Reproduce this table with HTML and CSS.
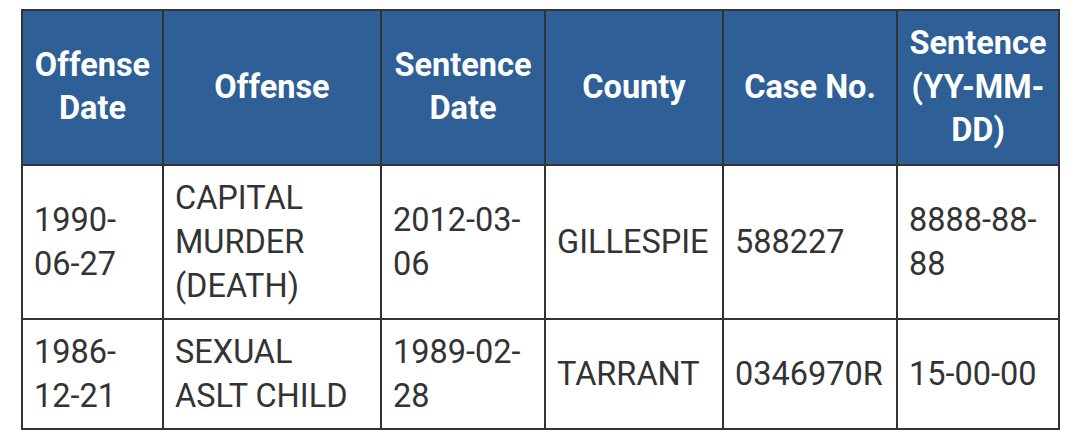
FILE: index.html
```html
<!DOCTYPE html>
<html>
<head>
<meta charset="utf-8">
<link rel="stylesheet" href="styles.css">
</head>
<body>
<table class="records">
  <colgroup>
    <col class="c1"><col class="c2"><col class="c3"><col class="c4"><col class="c5"><col class="c6">
  </colgroup>
  <thead>
    <tr>
      <th>Offense Date</th>
      <th>Offense</th>
      <th>Sentence Date</th>
      <th>County</th>
      <th>Case No.</th>
      <th>Sentence (YY-MM-DD)</th>
    </tr>
  </thead>
  <tbody>
    <tr class="r1">
      <td>1990-06-27</td>
      <td>CAPITAL MURDER (DEATH)</td>
      <td>2012-03-06</td>
      <td>GILLESPIE</td>
      <td>588227</td>
      <td>8888-88-88</td>
    </tr>
    <tr class="r2">
      <td>1986-12-21</td>
      <td>SEXUAL ASLT CHILD</td>
      <td>1989-02-28</td>
      <td>TARRANT</td>
      <td>0346970R</td>
      <td>15-00-00</td>
    </tr>
  </tbody>
</table>
</body>
</html>
```

FILE: styles.css
```css
html, body {
  margin: 0;
  padding: 0;
  background: #ffffff;
}
body {
  padding: 9px 0 0 21px;
  font-family: Roboto, "Liberation Sans", sans-serif;
}
.records {
  border-collapse: collapse;
  table-layout: fixed;
  width: 1039px;
  font-size: 32.5px;
  line-height: 44px;
  color: #333333;
}
.c1 { width: 141px; }
.c2 { width: 218px; }
.c3 { width: 164px; }
.c4 { width: 178px; }
.c5 { width: 174px; }
.c6 { width: 162px; }
.records th,
.records td {
  border: 2px solid #333333;
  padding: 10px 12px 10px 11px;
  vertical-align: middle;
  word-wrap: break-word;
}
.records th {
  background: #2e5f97;
  color: #ffffff;
  font-weight: 700;
  text-align: center;
  line-height: 43.5px;
  padding: 11px 6px;
}
.records td {
  text-align: left;
}
```
